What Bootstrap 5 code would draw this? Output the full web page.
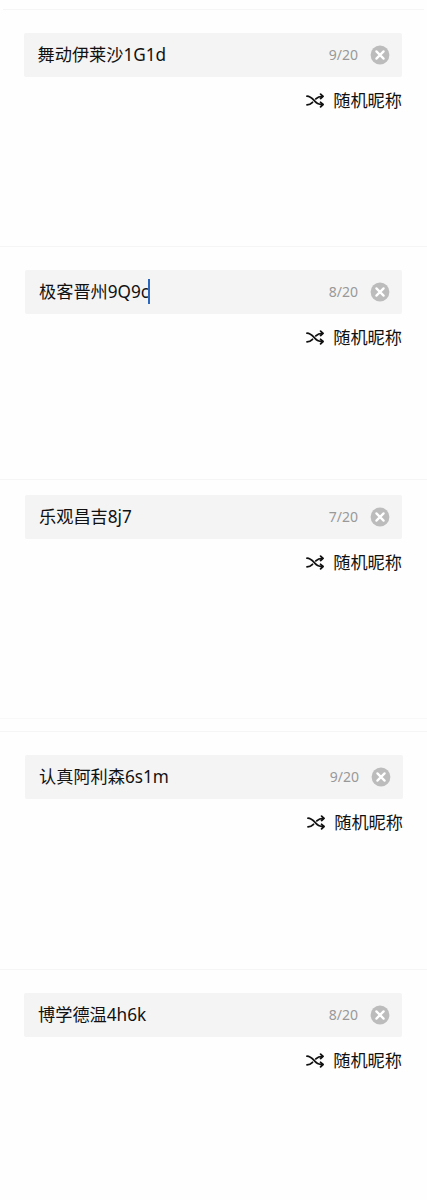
<!DOCTYPE html>
<html lang="zh-CN">
<head>
<meta charset="utf-8">
<meta name="viewport" content="width=device-width, initial-scale=1">
<title>随机昵称</title>
<link rel="stylesheet" href="https://cdn.jsdelivr.net/npm/bootstrap@5.3.0/dist/css/bootstrap.min.css">
<style>
  body { font-family: "Noto Sans", "Noto Sans CJK SC", sans-serif; color: #111; background: #fefefe; height: 1200px; overflow: hidden; }
  .panel { border-top: 1px solid #f5f5f5; padding: 23px 25px 0 24px; }
  .p1 { height: 237px; margin: 9px 3px 0 3px; padding-left: 20.5px; padding-right: 22px; }
  .p2 { height: 233px; }
  .p3 { height: 240px; padding-top: 15px; border-bottom: 1px solid #f8f8f8; }
  .p4 { height: 238px; margin-top: 12px; padding-right: 24px; }
  .p5 { height: 231px; }
  .p2, .p3, .p4 { padding-left: 25px; }
  .field { height: 43.5px; background: #f4f4f4; border-radius: 2px; padding: 0 12px 0 14px; }
  .nick { font-size: 17.2px; line-height: 26px; padding-top: 1px; }
  .caret { width: 2px; height: 25px; background: #2b68bd; margin-left: -1px; }
  .count { font-size: 14px; line-height: 20px; color: #999; margin-right: 12px; padding-top: 1px; }
  .shuffle-btn { font-size: 17.2px; line-height: 26px; margin-top: 11px; color: #111; gap: 9.5px; }
  .shuffle-btn svg { margin-top: -1px; }
</style>
</head>
<body>
<svg class="d-none" aria-hidden="true">
  <symbol id="clear" viewBox="0 0 20 20">
    <circle cx="10" cy="10" r="9.4" fill="#bcbcbc"/>
    <path d="M6.4 6.4l7.2 7.2M13.6 6.4l-7.2 7.2" stroke="#fff" stroke-width="2.3" stroke-linecap="round"/>
  </symbol>
  <symbol id="shuffle" viewBox="0 0 18 15">
    <g fill="none" stroke="#111" stroke-width="1.8" stroke-linecap="round" stroke-linejoin="round">
      <path d="M1 3.2C4.2 3.3 5.8 5 8.2 7.5C10.6 10 12 11.5 16.6 11.5"/>
      <path d="M1 11.8C3.6 11.7 5 10.8 6.5 9.3M9.8 5.8C11.6 4 13 3.3 16.6 3.3"/>
      <path d="M14.6 1.1L17 3.3L14.6 5.5M14.6 9.3L17 11.5L14.6 13.8"/>
    </g>
  </symbol>
</svg>

<section class="panel p1">
  <div class="field d-flex align-items-center">
    <span class="nick">舞动伊莱沙1G1d</span>
    <span class="count ms-auto">9/20</span>
    <svg width="20" height="20"><use href="#clear"/></svg>
  </div>
  <div class="shuffle-btn d-flex justify-content-end align-items-center"><svg width="18" height="15"><use href="#shuffle"/></svg><span>随机昵称</span></div>
</section>

<section class="panel p2">
  <div class="field d-flex align-items-center">
    <span class="nick">极客晋州9Q9c</span><span class="caret"></span>
    <span class="count ms-auto">8/20</span>
    <svg width="20" height="20"><use href="#clear"/></svg>
  </div>
  <div class="shuffle-btn d-flex justify-content-end align-items-center"><svg width="18" height="15"><use href="#shuffle"/></svg><span>随机昵称</span></div>
</section>

<section class="panel p3">
  <div class="field d-flex align-items-center">
    <span class="nick">乐观昌吉8j7</span>
    <span class="count ms-auto">7/20</span>
    <svg width="20" height="20"><use href="#clear"/></svg>
  </div>
  <div class="shuffle-btn d-flex justify-content-end align-items-center"><svg width="18" height="15"><use href="#shuffle"/></svg><span>随机昵称</span></div>
</section>

<section class="panel p4">
  <div class="field d-flex align-items-center">
    <span class="nick">认真阿利森6s1m</span>
    <span class="count ms-auto">9/20</span>
    <svg width="20" height="20"><use href="#clear"/></svg>
  </div>
  <div class="shuffle-btn d-flex justify-content-end align-items-center"><svg width="18" height="15"><use href="#shuffle"/></svg><span>随机昵称</span></div>
</section>

<section class="panel p5">
  <div class="field d-flex align-items-center">
    <span class="nick">博学德温4h6k</span>
    <span class="count ms-auto">8/20</span>
    <svg width="20" height="20"><use href="#clear"/></svg>
  </div>
  <div class="shuffle-btn d-flex justify-content-end align-items-center"><svg width="18" height="15"><use href="#shuffle"/></svg><span>随机昵称</span></div>
</section>
<script src="https://cdn.jsdelivr.net/npm/bootstrap@5.3.0/dist/js/bootstrap.bundle.min.js"></script>
</body>
</html>
